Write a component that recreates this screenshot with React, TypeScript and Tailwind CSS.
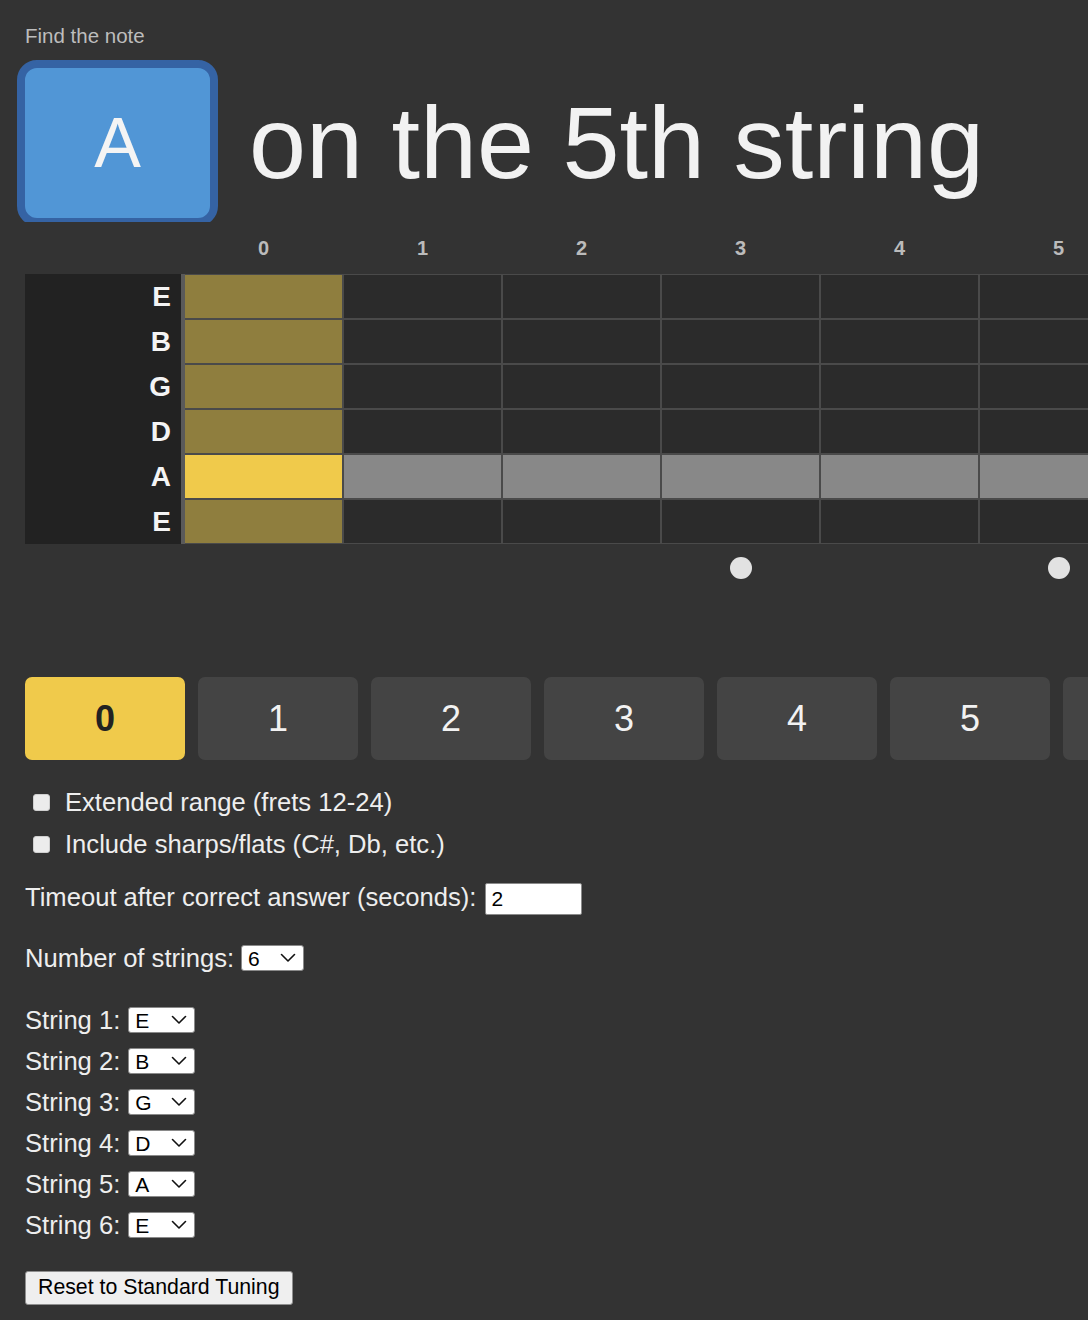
import React from "react";

const FRETS = Array.from({ length: 13 }, (_, i) => i);
const STRINGS = ["E", "B", "G", "D", "A", "E"];
const TARGET_ROW = 4;

function Chevron() {
  return (
    <svg width="16" height="10" viewBox="0 0 16 10" fill="none" className="shrink-0">
      <path d="M1.5 1.5 L8 8 L14.5 1.5" stroke="#111" strokeWidth="1.6" strokeLinecap="round" strokeLinejoin="round" />
    </svg>
  );
}

function FakeSelect({ value, w }: { value: string; w: string }) {
  return (
    <div
      className={`${w} h-[26px] bg-white border border-[#8a8a8a] rounded-[3px] flex items-center justify-between pl-[6px] pr-[7px] text-[21px] leading-none text-black`}
    >
      <span>{value}</span>
      <Chevron />
    </div>
  );
}

function Checkbox() {
  return <div className="w-[17px] h-[17px] rounded-[3px] bg-[#ececec] border border-[#cfcfcf] shrink-0" />;
}

export default function App() {
  return (
    <div className="min-h-[1320px] w-full overflow-hidden bg-[#333333] font-['Liberation_Sans',Arial,sans-serif] text-[#eeeeee]">
      <div className="pl-[25px]">
        {/* Header */}
        <div className="pt-[24px] text-[20.5px] leading-[24px] text-[#bdbdbd]">Find the note</div>
        <div className="mt-[12px] flex items-start">
          <div className="ml-[-8px] h-[162px] overflow-hidden shrink-0">
            <div className="w-[201px] h-[166px] rounded-[20px] border-[8px] border-[#3563a4] bg-[#5196d6] flex items-center justify-center text-[70px] leading-none text-[#f4f4f4]">
              A
            </div>
          </div>
          <div className="ml-[31px] mt-[23px] text-[102.5px] leading-[120px] text-[#f2f2f2] whitespace-nowrap">
            on the 5th string
          </div>
        </div>

        {/* Fret numbers */}
        <div className="h-[52px] flex items-center whitespace-nowrap">
          <div className="w-[160px] shrink-0" />
          <div className="flex gap-[2px]">
            {FRETS.map((f) => (
              <div key={f} className="w-[157px] shrink-0 text-center font-bold text-[20px] text-[#bbbbbb]">
                {f}
              </div>
            ))}
          </div>
        </div>

        {/* Fretboard */}
        <div className="flex items-stretch">
          <div className="w-[156px] shrink-0 bg-[#222222] flex flex-col">
            {STRINGS.map((s, i) => (
              <div
                key={i}
                className="flex-1 flex items-center justify-end pr-[10px] font-bold text-[28px] leading-none text-[#f4f4f4]"
              >
                {s}
              </div>
            ))}
          </div>
          <div className="w-[4px] shrink-0 bg-[#5a5a5a]" />
          <div className="flex flex-col gap-[2px] py-[1px] bg-[#4a4a4a]">
            {STRINGS.map((s, r) => (
              <div key={r} className="flex gap-[2px] h-[43px]">
                {FRETS.map((f) => {
                  let bg = "bg-[#2b2b2b]";
                  if (r === TARGET_ROW) bg = f === 0 ? "bg-[#f0ca4b]" : "bg-[#888888]";
                  else if (f === 0) bg = "bg-[#8f7e3e]";
                  return <div key={f} className={`w-[157px] shrink-0 ${bg}`} />;
                })}
              </div>
            ))}
          </div>
        </div>

        {/* Dots */}
        <div className="flex mt-[13px] h-[22px]">
          <div className="w-[160px] shrink-0" />
          <div className="flex gap-[2px]">
            {FRETS.map((f) => (
              <div key={f} className="w-[157px] shrink-0 flex justify-center gap-[10px]">
                {[3, 5, 7, 9].includes(f) && <div className="w-[22px] h-[22px] rounded-full bg-[#e2e2e2]" />}
                {f === 12 && (
                  <>
                    <div className="w-[22px] h-[22px] rounded-full bg-[#e2e2e2]" />
                    <div className="w-[22px] h-[22px] rounded-full bg-[#e2e2e2]" />
                  </>
                )}
              </div>
            ))}
          </div>
        </div>

        {/* Answer buttons */}
        <div className="mt-[98px] flex gap-[13px]">
          {FRETS.map((f) =>
            f === 0 ? (
              <div
                key={f}
                className="w-[160px] h-[83px] shrink-0 rounded-[7px] bg-[#f0ca4b] flex items-center justify-center font-bold text-[36px] text-[#222222]"
              >
                {f}
              </div>
            ) : (
              <div
                key={f}
                className="w-[160px] h-[83px] shrink-0 rounded-[7px] bg-[#444444] flex items-center justify-center text-[36px] text-[#f2f2f2]"
              >
                {f}
              </div>
            )
          )}
        </div>

        {/* Options */}
        <div className="mt-[28px] flex flex-col gap-[14px] pl-[8px]">
          <div className="flex items-center gap-[15px] h-[28px] text-[25.6px]">
            <Checkbox />
            <span>Extended range (frets 12-24)</span>
          </div>
          <div className="flex items-center gap-[15px] h-[28px] text-[25.6px]">
            <Checkbox />
            <span>Include sharps/flats (C#, Db, etc.)</span>
          </div>
        </div>

        <div className="mt-[23px] flex items-center h-[32px] text-[25.6px]">
          <span>Timeout after correct answer (seconds):</span>
          <div className="ml-[9px] mt-[3px] w-[97px] h-[32px] shrink-0 bg-white border border-[#8a8a8a] rounded-[2px] flex items-center pl-[5px] text-[21px] text-black">
            2
          </div>
        </div>

        <div className="mt-[32px] flex items-center h-[26px] text-[25.6px]">
          <span>Number of strings:</span>
          <div className="ml-[7px]">
            <FakeSelect value="6" w="w-[63px]" />
          </div>
        </div>

        <div className="mt-[36px] flex flex-col gap-[15px]">
          {STRINGS.map((s, i) => (
            <div key={i} className="flex items-center h-[26px] text-[25.6px]">
              <span>String {i + 1}:</span>
              <div className="ml-[8px]">
                <FakeSelect value={s} w="w-[67px]" />
              </div>
            </div>
          ))}
        </div>

        <div className="mt-[33px]">
          <div className="inline-flex items-center h-[34px] px-[12px] bg-[#efefef] border border-[#8f8f8f] rounded-[3px] text-[21.3px] text-black">
            Reset to Standard Tuning
          </div>
        </div>
      </div>
    </div>
  );
}
